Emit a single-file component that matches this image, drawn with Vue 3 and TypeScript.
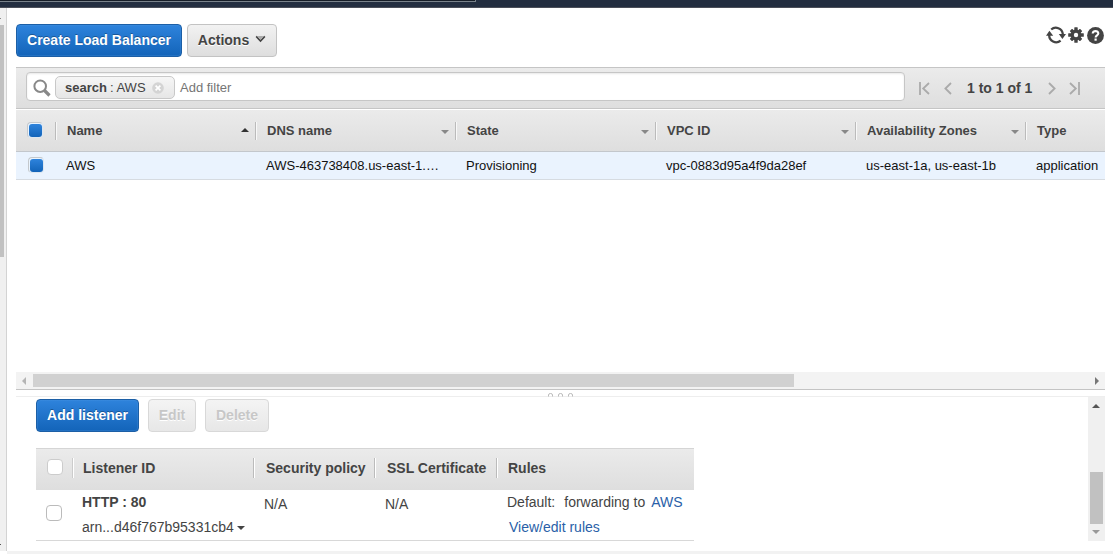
<script setup lang="ts">
interface Column {
  label: string
  value: string
  width: number
  sort: 'asc' | 'idle' | 'none'
}

const columns: Column[] = [
  { label: 'Name', value: 'AWS', width: 200, sort: 'asc' },
  { label: 'DNS name', value: 'AWS-463738408.us-east-1.…', width: 200, sort: 'idle' },
  { label: 'State', value: 'Provisioning', width: 200, sort: 'idle' },
  { label: 'VPC ID', value: 'vpc-0883d95a4f9da28ef', width: 200, sort: 'idle' },
  { label: 'Availability Zones', value: 'us-east-1a, us-east-1b', width: 170, sort: 'idle' },
  { label: 'Type', value: 'application', width: 79, sort: 'none' },
]
const gridColumns = '40px ' + columns.map((c) => c.width + 'px').join(' ')
</script>

<template>
  <div class="page">
    <div class="topbar"><div class="topline"></div></div>
    <div class="body">
      <div class="side">
        <div class="side-top"></div>
        <div class="side-thumb"></div>
        <div class="side-tick"></div>
      </div>
      <main class="main">
        <div class="toolbar">
          <button class="btn primary create">Create Load Balancer</button>
          <button class="btn actions">
            Actions
            <svg width="11" height="8" viewBox="0 0 11 8"><path d="M1.2 1.4 5.5 6 9.8 1.4" fill="none" stroke="#444" stroke-width="1.7" /><path d="M2.5 1h6L5.5 4.4z" fill="#aaa" /></svg>
          </button>
          <div class="tools">
            <svg width="20" height="18" viewBox="0 0 20 18">
              <path d="M5.2 3.5A7 7 0 0 1 16.8 8M14.6 14.7A7 7 0 0 1 3.2 9" fill="none" stroke="#444" stroke-width="2.3" />
              <path d="M0 9.8 3.4 4.8 7.2 9.8zM12.8 8h7.2l-3.6 5z" fill="#444" />
            </svg>
            <svg class="gear" width="16" height="16" viewBox="0 0 16 16">
              <g fill="#444">
                <rect x="6.3" y=".2" width="3.4" height="15.6" rx=".5" />
                <rect x="6.3" y=".8" width="3.4" height="14.4" rx=".5" transform="rotate(45 8 8)" />
                <rect x="6.3" y=".2" width="3.4" height="15.6" rx=".5" transform="rotate(90 8 8)" />
                <rect x="6.3" y=".8" width="3.4" height="14.4" rx=".5" transform="rotate(135 8 8)" />
                <circle cx="8" cy="8" r="5.4" />
              </g>
              <circle cx="8" cy="8" r="2.2" fill="#fff" />
            </svg>
            <svg class="help" width="17" height="17" viewBox="0 0 17 17">
              <circle cx="8.5" cy="8.5" r="8.4" fill="#444" />
              <path d="M5.7 6.6C5.7 3.2 11.4 3.3 11.3 6.5c0 1.8-2.7 2-2.7 4" fill="none" stroke="#fff" stroke-width="2.1" />
              <rect x="7.5" y="11.5" width="2.2" height="2.2" fill="#fff" />
            </svg>
          </div>
        </div>

        <div class="filterbar">
          <div class="search">
            <svg width="18" height="18" viewBox="0 0 18 18">
              <circle cx="7.2" cy="7.2" r="5.8" fill="none" stroke="#888" stroke-width="2" />
              <path d="m11.5 11.5 5 5" stroke="#888" stroke-width="3.2" />
            </svg>
            <span class="chip"><b>search</b><span class="chip-value">: AWS</span>
              <svg width="12" height="12" viewBox="0 0 12 12"><circle cx="6" cy="6" r="5.8" fill="#d4d4d4" /><path d="m3.6 3.6 4.8 4.8m0-4.8L3.6 8.4" stroke="#fff" stroke-width="1.7" /></svg>
            </span>
            <span class="placeholder">Add filter</span>
          </div>
          <div class="pager">
            <svg width="11" height="13" viewBox="0 0 11 13"><path d="M1 0v13M10 1 4.2 6.5 10 12" /></svg>
            <svg class="prev" width="8" height="13" viewBox="0 0 8 13"><path d="M7 1 1.4 6.5 7 12" /></svg>
            <b>1 to 1 of 1</b>
            <svg class="next" width="8" height="13" viewBox="0 0 8 13"><path d="m1 1 5.6 5.5L1 12" /></svg>
            <svg class="last" width="11" height="13" viewBox="0 0 11 13"><path d="M10 0v13M1 1l5.8 5.5L1 12" /></svg>
          </div>
        </div>

        <div class="thead" :style="{ gridTemplateColumns: gridColumns }">
          <div class="pick"><span class="check on"></span></div>
          <div v-for="c in columns" :key="c.label" class="th">
            <span>{{ c.label }}</span>
            <i v-if="c.sort !== 'none'" class="arrow" :class="c.sort"></i>
          </div>
        </div>
        <div class="trow" :style="{ gridTemplateColumns: gridColumns }">
          <div class="pick"><span class="check on"></span></div>
          <div v-for="c in columns" :key="c.label" class="td">{{ c.value }}</div>
        </div>
        <div class="blank"></div>

        <div class="hscroll">
          <i class="tri left"></i><div class="hthumb"></div><i class="tri right"></i>
        </div>
        <div class="splitter">
          <svg width="28" height="5" viewBox="0 0 28 5"><g fill="none" stroke="#bbb"><path d="M1.5 4.5v-1.5q0-1.5 2-1.5t2 1.5v1.5M11.5 4.5v-1.5q0-1.5 2-1.5t2 1.5v1.5M21.5 4.5v-1.5q0-1.5 2-1.5t2 1.5v1.5" /></g></svg>
        </div>

        <div class="lower">
          <div class="panel">
            <div class="buttons">
              <button class="btn primary add">Add listener</button>
              <button class="btn off edit">Edit</button>
              <button class="btn off delete">Delete</button>
            </div>
            <div class="listeners">
              <div class="lhead">
                <div class="lpick"><span class="check"></span></div>
                <div class="lh first">Listener ID</div>
                <div class="lh wide">Security policy</div>
                <div class="lh wide">SSL Certificate</div>
                <div class="lh">Rules</div>
              </div>
              <div class="lrow">
                <div class="lpick"><span class="check"></span></div>
                <div class="ld"><b>HTTP : 80</b><span class="arn">arn...d46f767b95331cb4<i class="arrow dark"></i></span></div>
                <div class="ld na">N/A</div>
                <div class="ld na">N/A</div>
                <div class="ld rules">
                  <span>Default:<span class="forward">forwarding to</span><a>AWS</a></span>
                  <a class="view">View/edit rules</a>
                </div>
              </div>
            </div>
          </div>
          <div class="vscroll">
            <i class="tri up"></i><div class="vthumb"></div><i class="tri down"></i>
          </div>
        </div>
      </main>
    </div>
    <div class="foot"></div>
  </div>
</template>

<style>
body { margin: 0; background: #fff; overflow: hidden; }
</style>

<style scoped>
.page, .page * { box-sizing: border-box; }
.page { width: 1113px; height: 554px; display: flex; flex-direction: column; font: 14px/16px "Liberation Sans", Arial, sans-serif; color: #444; background: #fff; overflow: hidden; white-space: nowrap; }
svg { display: block; flex: none; }
.topbar { height: 8px; flex: none; background: #232e40; border-bottom: 1px solid #4b4f59; }
.topline { width: 476px; height: 2px; background: #161d27; border-bottom: 1px solid #79828a; border-right: 1px solid #79828a; }
.body { flex: 1; display: flex; min-height: 0; }
.side { width: 7px; flex: none; background: #f0f0f0; border-right: 1px solid #d3d3d3; }
.side-top { height: 17px; padding-top: 10px; }
.side-top::before { content: ""; display: block; width: 1px; height: 1px; background: #888; }
.side-thumb { width: 4px; height: 232px; background: #c1c1c1; }
.side-tick { width: 1px; height: 1px; margin-top: 287px; background: #555; }
.main { width: 1089px; margin-left: 9px; display: flex; flex-direction: column; }
.toolbar { height: 59px; flex: none; padding-top: 16px; display: flex; align-items: flex-start; }
.btn { height: 33px; padding: 0 0 1px; border: 1px solid #c3c3c3; border-radius: 4px; background: linear-gradient(#f2f2f2, #dedede); color: #444; font: bold 14px/16px "Liberation Sans", Arial, sans-serif; display: flex; align-items: center; justify-content: center; flex: none; }
.primary { color: #fff; border-color: #1c5fa6; background: linear-gradient(#2e83dc, #1364b9); box-shadow: inset 0 0 0 1px rgba(80, 150, 225, .25); text-shadow: 0 -1px 0 rgba(0, 0, 0, .3); }
.create { width: 166px; }
.actions { width: 90px; margin-left: 5px; gap: 6px; text-shadow: 0 1px 0 #fff; }
.actions svg { margin-top: -2px; }
.tools { margin-left: auto; display: flex; align-items: center; height: 22px; padding-right: 1px; }
.gear { margin-left: 2px; }
.help { margin-left: 3px; }
.filterbar { height: 42px; flex: none; display: flex; padding: 4px 0 0 10px; border-top: 1px solid #c5c5c5; border-bottom: 1px solid #c5c5c5; background: linear-gradient(#ebebeb, #dedede); }
.search { width: 879px; height: 29px; border: 1px solid #c6c6c6; border-radius: 4px; background: #fff; box-shadow: inset 0 1px 2px #e8e8e8; display: flex; align-items: center; padding-left: 6px; font-size: 13px; }
.search > svg { margin-top: 3px; }
.chip { width: 120px; height: 23px; margin: 1px 0 0 4px; padding: 1px 0 0 9px; border: 1px solid #c8c8c8; border-radius: 5px; background: linear-gradient(#f6f6f6, #e6e6e6); display: flex; align-items: center; }
.chip-value { margin-left: 3px; }
.chip svg { margin-left: 6px; margin-top: 1px; }
.placeholder { margin: 2px 0 0 5px; color: #757575; }
.pager { height: 29px; margin-left: 14px; display: flex; align-items: center; padding-top: 3px; }
.pager svg { fill: none; stroke: #aaa; stroke-width: 1.8; }
.pager b { margin-left: 15px; }
.prev { margin-left: 14px; }
.pager .next { margin-left: 16px; }
.last { margin-left: 13px; }
.thead { height: 43px; flex: none; display: grid; align-items: center; background: linear-gradient(#ebebeb, #dedede); border-top: 1px solid #fff; border-bottom: 1px solid #c3c7cc; font-weight: bold; font-size: 13px; }
.pick { padding: 0 0 1px 11px; }
.check { display: block; width: 16px; height: 16px; border: 1px solid #bbb; border-radius: 4px; background: #fff; }
.check.on { border-color: #c4c8cc #dce6f0 #dce6f0 #c4c8cc; padding: 1px 0 0 1px; background: #e9f4ff; }
.check.on::after { content: ""; display: block; width: 13px; height: 13px; border-radius: 3px; background: linear-gradient(#2e83dc, #1364b9); }
.th { height: 18px; display: flex; align-items: center; padding: 0 7px 0 11px; border-left: 1px solid #bbb; box-shadow: inset 1px 0 #f8f8f8; margin-left: -1px; }
.arrow { width: 0; height: 0; border: 4px solid transparent; border-bottom: 0; border-top-color: #888; margin-left: auto; margin-top: 2px; }
.arrow.asc { border-bottom: 4px solid #333; border-top: 0; margin-top: -1px; }
.trow { height: 28px; flex: none; display: grid; align-items: center; background: #eaf3fe; border-bottom: 1px solid #d6dbe1; font-size: 13px; color: #111; }
.trow .pick { padding-left: 12px; }
.trow .td { padding-left: 10px; }
.blank { height: 192px; flex: none; }
.hscroll { height: 18px; flex: none; background: #f3f3f3; border-bottom: 1px solid #c4c4c4; display: flex; align-items: center; padding: 0 6px 0 6px; }
.hthumb { width: 761px; height: 13px; background: #d1d1d1; margin-left: 7px; }
.tri { width: 0; height: 0; border: 4px solid transparent; flex: none; }
.left { border-left: 0; border-right-color: #b5b5b5; }
.right { border-right: 0; border-left-color: #777; margin-left: auto; }
.splitter { height: 7px; flex: none; border-bottom: 1px solid #eee; display: flex; justify-content: center; padding-top: 2px; }
.lower { display: flex; height: 145px; flex: none; }
.panel { width: 1072px; padding: 2px 0 0 20px; }
.buttons { display: flex; height: 49px; }
.add { width: 103px; margin-right: 9px; }
.edit { width: 48px; margin-right: 9px; }
.delete { width: 64px; }
.off { color: #c7c7c7; border-color: #d8d8d8; background: linear-gradient(#f4f4f4, #e7e7e7); text-shadow: 0 1px 0 #fff; }
.listeners { width: 658px; }
.lhead, .lrow { display: grid; grid-template-columns: 36px 181px 121px 122px 198px; }
.lhead { height: 42px; align-items: center; background: linear-gradient(#ebebeb, #dedede); border-top: 1px solid #d5d5d5; font-weight: bold; }
.lhead .lpick { padding: 0 0 6px 11px; }
.lhead .check { border-color: #ccc; }
.lh { height: 20px; line-height: 20px; padding-left: 11px; margin-bottom: 3px; border-left: 1px solid #bbb; box-shadow: inset 1px 0 #fff; }
.first { padding-left: 10px; border-color: #ccc; }
.wide { padding-left: 12px; }
.lrow { height: 51px; border-bottom: 1px solid #d8d8d8; }
.lrow .lpick { padding: 15px 0 0 10px; }
.ld { padding: 4px 0 0 10px; display: flex; flex-direction: column; }
.na { padding: 6px 0 0 11px; }
.rules { padding-left: 11px; }
.arn { margin-top: 9px; display: flex; align-items: center; }
.dark { border-top-color: #444; margin-left: 3px; }
.forward { margin: 0 6px 0 9px; }
a { color: #2a5fa8; }
.view { margin: 9px 0 0 2px; }
.vscroll { width: 17px; height: 144px; background: #f0f0f0; display: flex; flex-direction: column; align-items: center; padding: 7px 1px 7px 0; }
.vthumb { width: 13px; height: 52px; background: #c1c1c1; margin-top: 64px; }
.up { border-top: 0; border-bottom-color: #555; }
.down { border-bottom: 0; border-top-color: #999; margin-top: 6px; }
.foot { height: 3px; margin-left: 7px; background: #f2f2f2; flex: none; }
</style>
